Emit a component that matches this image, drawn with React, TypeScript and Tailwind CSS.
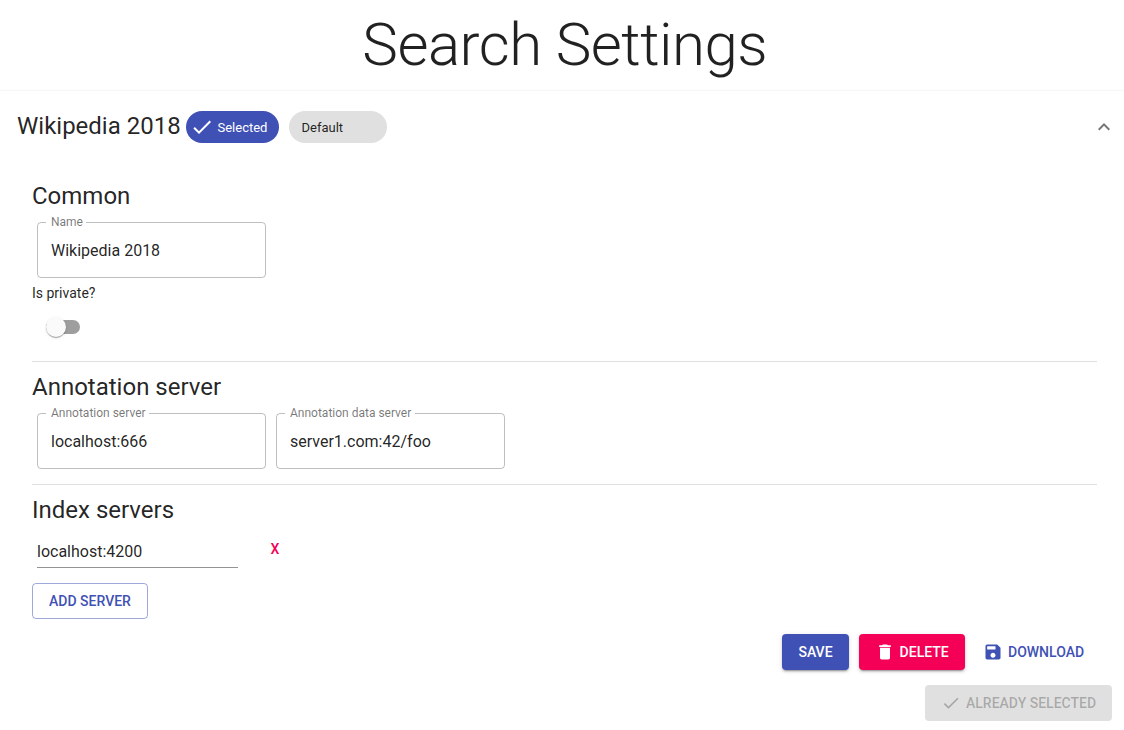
import React from "react";

const CHECK = "M9 16.2L4.8 12l-1.4 1.4L9 19 21 7l-1.4-1.4L9 16.2z";
const TRASH = "M6 19c0 1.1.9 2 2 2h8c1.1 0 2-.9 2-2V7H6v12zM19 4h-3.5l-1-1h-5l-1 1H5v2h14V4z";
const DISK =
  "M17 3H5c-1.11 0-2 .9-2 2v14c0 1.1.89 2 2 2h14c1.1 0 2-.9 2-2V7l-4-4zm-5 16c-1.66 0-3-1.34-3-3s1.34-3 3-3 3 1.34 3 3-1.34 3-3 3zm3-10H5V5h10v4z";
const LESS = "M12 8l-6 6 1.41 1.41L12 10.83l4.59 4.58L18 14z";

function Icon({ d, className }: { d: string; className: string }) {
  return (
    <svg viewBox="0 0 24 24" fill="currentColor" className={`shrink-0 ${className}`}>
      <path d={d} />
    </svg>
  );
}

function Heading({ children }: { children: React.ReactNode }) {
  return <h2 className="h-8 text-2xl leading-8">{children}</h2>;
}

function OutlinedField({ label, value }: { label: string; value: string }) {
  return (
    <fieldset className="-mt-[6px] h-[62px] w-[229px] rounded border border-black/25 pl-[13px]">
      <legend className="-ml-[5px] h-3 pl-[5px] pr-[3.5px] text-xs leading-3 text-black/54">
        {label}
      </legend>
      <div className="pt-[13px] text-base leading-[19px]">{value}</div>
    </fieldset>
  );
}

const BUTTON =
  "flex h-9 items-center rounded text-sm leading-6 font-medium uppercase whitespace-nowrap";
const RAISED =
  "shadow-[0px_3px_1px_-2px_rgba(0,0,0,0.2),0px_2px_2px_0px_rgba(0,0,0,0.14),0px_1px_5px_0px_rgba(0,0,0,0.12)]";

export default function App() {
  return (
    <div className="h-[730px] overflow-hidden bg-white font-[Roboto,sans-serif] text-black/87">
      <h1 className="h-[91px] pt-[9px] pl-[5.5px] text-center text-[60px] leading-[72px] font-light tracking-[-0.00833em]">
        Search Settings
      </h1>
      <section className="-mx-1 h-[639px] px-1 shadow-[0px_2px_1px_-1px_rgba(0,0,0,0.2),0px_1px_1px_0px_rgba(0,0,0,0.14),0px_1px_3px_0px_rgba(0,0,0,0.2)]">
        <header className="flex h-[72px] items-center pr-2 pl-[17px]">
          <span className="w-[169px] pb-0.5 text-2xl leading-8 whitespace-nowrap">Wikipedia 2018</span>
          <span className="flex h-8 w-[93px] items-center rounded-full bg-[#3f51b5] pl-[5px] text-[13px] text-white">
            <Icon d={CHECK} className="mr-[3.5px] size-6 -ml-px" />
            <span className="pt-px">Selected</span>
          </span>
          <span className="ml-2.5 flex h-8 w-[98px] items-center rounded-full bg-[#e0e0e0] pt-px pl-[12.5px] text-[13px]">
            Default
          </span>
          <Icon d={LESS} className="ml-auto size-6 text-black/54" />
        </header>

        <div className="px-8 pt-[17px]">
          <Heading>Common</Heading>
          <div className="mt-2.5 ml-[5px]">
            <OutlinedField label="Name" value="Wikipedia 2018" />
          </div>
          <div className="mt-[5px] text-sm leading-5">Is private?</div>
          <div className="mt-[14px] ml-[14px] flex h-5 w-[34px] items-center">
            <span className="z-10 size-5 shrink-0 rounded-full bg-[#fafafa] shadow-[0px_2px_1px_-1px_rgba(0,0,0,0.2),0px_1px_1px_0px_rgba(0,0,0,0.14),0px_1px_3px_0px_rgba(0,0,0,0.12)]" />
            <span className="-ml-5 h-3.5 w-[34px] shrink-0 rounded-full bg-black/38" />
          </div>
          <hr className="mt-6 w-[1065px] border-black/12" />

          <div className="mt-[9px]">
            <Heading>Annotation server</Heading>
          </div>
          <div className="mt-2.5 ml-[5px] flex gap-2.5">
            <OutlinedField label="Annotation server" value="localhost:666" />
            <OutlinedField label="Annotation data server" value="server1.com:42/foo" />
          </div>
          <hr className="mt-[15px] w-[1065px] border-black/12" />

          <div className="mt-[9px]">
            <Heading>Index servers</Heading>
          </div>
          <div className="mt-[10px] ml-[5px] flex h-8 items-start">
            <div className="h-8 w-[201px] border-b border-black/42 pt-[6px] text-base leading-[19px]">
              localhost:4200
            </div>
            <button className="mt-px ml-[32.5px] text-sm leading-6 font-medium text-[#f50057]">X</button>
          </div>
          <button className={`${BUTTON} mt-[15px] w-[116px] justify-center border border-[#3f51b5]/50 text-[#3f51b5]`}>
            Add server
          </button>
        </div>

        <footer className="flex flex-col items-end gap-[15px] pt-[15px] pr-3">
          <div className="flex gap-2.5">
            <button className={`${BUTTON} ${RAISED} w-[67px] justify-center bg-[#3f51b5] text-white`}>Save</button>
            <button className={`${BUTTON} ${RAISED} w-[106px] gap-[4.6px] bg-[#f50057] pl-4 text-white`}>
              <Icon d={TRASH} className="size-5" />
              Delete
            </button>
            <button className={`${BUTTON} w-[137px] gap-[5px] pl-2 text-[#3f51b5]`}>
              <Icon d={DISK} className="size-5" />
              Download
            </button>
          </div>
          <button className={`${BUTTON} w-[187px] gap-[5px] bg-black/12 pl-4 text-black/26`}>
            <Icon d={CHECK} className="size-5" />
            Already selected
          </button>
        </footer>
      </section>
    </div>
  );
}
